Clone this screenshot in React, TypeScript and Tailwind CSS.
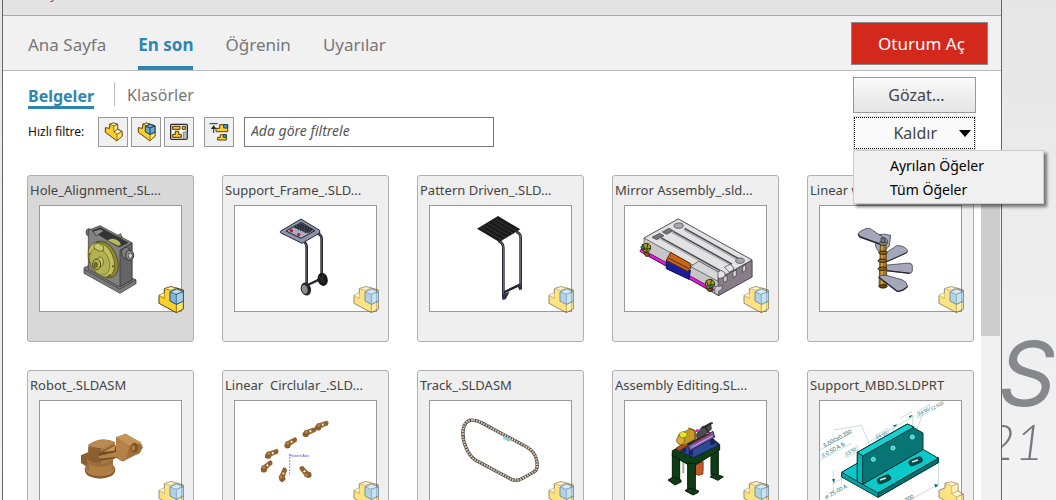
import { useState } from "react";
import type { ReactNode } from "react";

interface RecentDoc {
  id: string;
  name: string;
  kind: "assembly" | "part";
  art: ReactNode;
}

const tabs = ["Ana Sayfa", "En son", "Öğrenin", "Uyarılar"];

/* ---------- file type icons ---------- */

const AssemblyBadge = () => (
  <svg viewBox="412 346 78 87" className="h-[29px] w-[26px]" strokeLinejoin="round">
    <path d="M415 374l16-7v-13l20-6 17 4 20 6v57l-21 11-52-28z" fill="#fbd02c" stroke="#5a3d0c" strokeWidth="3" />
    <path d="M431 354l20-6 16 4-17 7z" fill="#fdf0b8" stroke="#8a6a1c" strokeWidth="2" />
    <path d="M415 374l16-7v12z" fill="#fdf0b8" />
    <path d="M415 374l16 10v-18" fill="none" stroke="#8a6a1c" strokeWidth="2" />
    <path d="M467 401l21-11v25l-21 11z" fill="#fce566" stroke="#5a3d0c" strokeWidth="2" />
    <path d="M448 364l20-9 20 8v28l-21 10-19-10z" fill="#7fb5d8" stroke="#1d4c66" strokeWidth="3" />
    <path d="M448 364l20-9 20 8-21 8z" fill="#b9dcf0" stroke="#1d4c66" strokeWidth="2" />
    <path d="M467 371v30l21-10v-28z" fill="#a3cfe8" stroke="#1d4c66" strokeWidth="2" />
  </svg>
);

const PartBadge = () => (
  <svg viewBox="412 451 78 87" className="h-[29px] w-[26px]" strokeLinejoin="round">
    <path d="M415 479l18-7v-14l19-4 20 5v22l16 9v26l-21 13-52-29z" fill="#fbd02c" stroke="#5a3d0c" strokeWidth="3" />
    <path d="M433 458l19-4 20 5-19 7z" fill="#fdf0b8" stroke="#8a6a1c" strokeWidth="2" />
    <path d="M453 466l19-7v22l-19 8z" fill="#fce98a" stroke="#8a6a1c" strokeWidth="2" />
    <path d="M453 489l18-8 17 9-20 9z" fill="#fdf0b8" stroke="#8a6a1c" strokeWidth="2" />
    <path d="M468 499l20-9v26l-20 13z" fill="#fce566" stroke="#5a3d0c" strokeWidth="2" />
  </svg>
);

const PartFilterIcon = () => (
  <svg viewBox="309 366 60 60" className="size-5" strokeLinejoin="round">
    <path d="M316 383l13 2v-12l11-4 13 4v14l13 7v15l-16 13-34-25z" fill="#fbd02c" stroke="#5a3d0c" strokeWidth="3" />
    <path d="M329 373l11-4 13 4-12 5z" fill="#fdf0b8" stroke="#5a3d0c" strokeWidth="2" />
    <path d="M341 378l12-5v15l-11 8z" fill="#fce98a" stroke="#5a3d0c" strokeWidth="2" />
    <path d="M342 396l11-8 13 6-14 9z" fill="#fdf0b8" stroke="#5a3d0c" strokeWidth="2" />
    <path d="M351 403v19l15-13v-15z" fill="#fce566" stroke="#5a3d0c" strokeWidth="2" />
  </svg>
);

const AssemblyFilterIcon = () => (
  <svg viewBox="408 366 60 60" className="size-5" strokeLinejoin="round">
    <path d="M415 383l13 2v-12l11-4 26 8v32l-16 13-34-25z" fill="#fbd02c" stroke="#5a3d0c" strokeWidth="3" />
    <path d="M428 373l11-4 11 3-10 5z" fill="#fdf0b8" stroke="#5a3d0c" strokeWidth="2" />
    <path d="M450 403v19l15-13v-13z" fill="#fce566" stroke="#5a3d0c" strokeWidth="2" />
    <path d="M436 379l14-6 15 5v19l-15 6-14-7z" fill="#6aa9d0" stroke="#1d3f56" strokeWidth="3" />
    <path d="M436 379l14 5 15-6M450 384v19" fill="none" stroke="#1d3f56" strokeWidth="3" />
  </svg>
);

const DrawingFilterIcon = () => (
  <svg viewBox="507 366 60 60" className="size-5">
    <rect x="512" y="373" width="50" height="45" rx="3" fill="#f4f4f4" stroke="#2b2b2b" strokeWidth="4" />
    <path d="M518 379h22v9h-22zM547 379h9v9h-9z" fill="#fbc81c" stroke="#4a3208" strokeWidth="3" />
    <path d="M526 394h10v9h8v9h-26v-9h8z" fill="#fbc81c" stroke="#4a3208" strokeWidth="3" />
    <path d="M550 396h11v21h-11z" fill="#b8b8b8" stroke="#666" strokeWidth="2" />
  </svg>
);

const TopLevelFilterIcon = () => (
  <svg viewBox="627 366 60 60" className="size-5">
    <path d="M629 371h24M641 399v-22" stroke="#2b2b2b" strokeWidth="3" />
    <path d="M632 387l9-11 9 11z" fill="#2b2b2b" />
    <path d="M659 374h24v21h-35v-10h11z" fill="#fbd02c" stroke="#5a3d0c" strokeWidth="3" />
    <path d="M671 374h12v10h-12z" fill="#4f9fd0" stroke="#1d3f56" strokeWidth="3" />
    <path d="M661 404h18v16h-26v-8h8z" fill="#fbd02c" stroke="#5a3d0c" strokeWidth="3" />
    <path d="M670 404h9v8h-9z" fill="#4f9fd0" stroke="#1d3f56" strokeWidth="3" />
  </svg>
);

const filters = [
  { id: "parts", label: "Parçalar", icon: <PartFilterIcon /> },
  { id: "assemblies", label: "Montajlar", icon: <AssemblyFilterIcon /> },
  { id: "drawings", label: "Teknik resimler", icon: <DrawingFilterIcon /> },
];

/* ---------- model previews ---------- */

const HoleAlignmentArt = () => (
  <svg viewBox="60 108 423 315" className="h-full w-full" strokeLinejoin="round">
    <g stroke="#2e2e2e" strokeWidth="2">
      <ellipse cx="207" cy="187" rx="9" ry="11" fill="#777" />
      <path d="M192 293l24-10 132 46v12l-48 29-108-60z" fill="#7c7c7e" />
      <path d="M192 298l107 59 49-27" fill="none" />
      <path d="M205 181l35-14 96 51v112l-39 20-92-52z" fill="#808082" />
      <path d="M300 240l36-21v111l-36 20z" fill="#656567" />
      <path d="M216 182l25-9 83 45-27 13z" fill="#343436" />
      <path d="M262 212c8-12 37-8 42 13l-9 4z" fill="#b9b95a" />
      <path d="M294 196l8-5 4 12h-8z" fill="#8f8f35" />
      <path d="M219 184l22-7 10 6-22 15z" fill="#8c8c8e" />
    </g>
    <ellipse cx="254" cy="268" rx="37" ry="58" transform="rotate(-24 254 268)" fill="#8b8a31" stroke="#3c3b12" strokeWidth="2" />
    <ellipse cx="244" cy="269" rx="36" ry="55" transform="rotate(-24 244 269)" fill="#c2c160" stroke="#4a4916" strokeWidth="2" />
    <ellipse cx="239" cy="275" rx="28" ry="42" transform="rotate(-24 239 275)" fill="#b3b252" stroke="#6d6c28" strokeWidth="2" />
    <path d="M222 224l12-5 16 9 1 13-12 3-17-9z" fill="#c9c86b" stroke="#4a4916" strokeWidth="2" />
    <ellipse cx="240" cy="276" rx="10" ry="15" fill="#c8c76b" stroke="#4a4916" strokeWidth="2" />
    <ellipse cx="230" cy="283" rx="12" ry="16" fill="#b6b556" stroke="#4a4916" strokeWidth="3" />
    <ellipse cx="227" cy="285" rx="5" ry="8" fill="#77762a" stroke="#3c3b12" strokeWidth="2" />
    <circle cx="208" cy="253" r="3" fill="#55541c" />
    <circle cx="279" cy="289" r="3" fill="#55541c" />
    <circle cx="268" cy="316" r="3" fill="#55541c" />
    <ellipse cx="318" cy="249" rx="13" ry="17" fill="#7d7d7f" stroke="#2e2e2e" strokeWidth="2" />
    <ellipse cx="329" cy="256" rx="12" ry="15" fill="#8c8c8e" stroke="#2e2e2e" strokeWidth="3" />
    <ellipse cx="331" cy="257" rx="6" ry="8" fill="#d5d5d5" stroke="#2e2e2e" strokeWidth="2" />
  </svg>
);

const SupportFrameArt = () => (
  <svg viewBox="60 108 423 315" className="h-full w-full" strokeLinejoin="round" fill="none">
    <path d="M262 212q13 7 13 20v108M305 188q15 5 15 20v105" stroke="#20232c" strokeWidth="8" />
    <path d="M262 212q13 7 13 20v108M305 188q15 5 15 20v105" stroke="#747a8a" strokeWidth="2" />
    <path d="M278 345l42-20" stroke="#252833" strokeWidth="7" />
    <path d="M196 184l62-37 56 34v8l-53 31-65-32z" fill="#8f94ab" stroke="#252833" strokeWidth="3" />
    <path d="M213 183l46-26 41 25-42 23z" fill="#a8acbe" stroke="#20232c" strokeWidth="3" />
    <path d="M234 172l24-14 40 22-18 10z" fill="#444752" />
    <path d="M240 171l37 18M248 166l37 19M257 162l35 19" stroke="#14151a" strokeWidth="4" strokeDasharray="5 3" />
    <circle cx="229" cy="182" r="5" fill="#c01a22" />
    <circle cx="251" cy="194" r="5" fill="#c01a22" />
    <ellipse cx="323" cy="328" rx="15" ry="20" transform="rotate(-15 323 328)" fill="#17181b" />
    <path d="M313 318l8 18M322 315l4 24" stroke="#454852" strokeWidth="2" />
    <ellipse cx="273" cy="357" rx="15" ry="20" transform="rotate(-15 273 357)" fill="#25272b" />
    <ellipse cx="269" cy="358" rx="10" ry="15" transform="rotate(-15 269 358)" fill="#8b8d8f" stroke="#111" strokeWidth="2" />
  </svg>
);

const PatternDrivenArt = () => (
  <svg viewBox="60 108 423 315" className="h-full w-full" strokeLinejoin="round" fill="none">
    <path d="M266 214q14 5 14 20v150M318 185q14 4 14 18v155" stroke="#1f222b" strokeWidth="8" />
    <path d="M266 214q14 5 14 20v150M318 185q14 4 14 18v155" stroke="#6d7386" strokeWidth="3" />
    <path d="M282 367l50-24" stroke="#20232e" strokeWidth="7" />
    <path d="M277 390v-17l22-8-12 23zM321 345l15-5v18l-8 2z" fill="#2f3342" />
    <path d="M201 176l63-38 67 40-63 38z" fill="#1a1a1a" />
    <path d="M211 172l68 39M222 165l68 40M233 159l68 39M244 152l68 40M254 146l68 39" stroke="#444" strokeWidth="2" />
  </svg>
);

const MirrorAssemblyArt = () => (
  <svg viewBox="60 108 423 315" className="h-full w-full" strokeLinejoin="round">
    <g stroke="#3a3a3c" strokeWidth="2">
      <path d="M117 204l103-57 221 123v51l-101 56-223-126z" fill="#c6c6c8" />
      <path d="M117 204l103-57 221 123-102 57z" fill="#e2e2e3" />
      <path d="M339 328l102-57v50l-101 56z" fill="#877d88" />
    </g>
    {/* T-slots */}
    <g fill="none">
      <path d="M168 205l176 98M204 186l176 98M238 177l170 95" stroke="#4a4a4e" strokeWidth="8" />
      <path d="M167 207l176 98M203 188l176 98M237 179l170 95" stroke="#bcbcbf" strokeWidth="4" />
    </g>
    <g stroke="#3a3a3c" strokeWidth="2">
      <path d="M141 202l23-12 13 7-22 12zM172 186l20-11 13 7-20 11z" fill="#77737a" />
      <ellipse cx="221" cy="167" rx="14" ry="8" fill="#a8a8aa" />
      <ellipse cx="405" cy="272" rx="13" ry="8" fill="#a8a8aa" />
      <path d="M330 311l18-10 12 7v12l-17 6zM358 292l17-9 10 8v10l-12 5z" fill="#e5e5e6" />
      <path d="M356 321l10-5v16l-10 5zM384 305l10-5v17l-10 5zM413 290l9-6v17l-9 6z" fill="#d8d8da" />
      <path d="M257 290l24-17 58 33v28z" fill="#d6d6d8" />
      <path d="M330 350l22-3-2 12-9 5v12l-12-7z" fill="#c9c9cc" />
    </g>
    <path d="M106 240l78 43M247 318l78 44" stroke="#3f0a40" strokeWidth="11" />
    <path d="M106 240l78 43M247 318l78 44" stroke="#f014e6" strokeWidth="7" />
    <path d="M184 270l7-5 65 36-4 27-68-32z" fill="#1b1b9c" stroke="#0b0b45" strokeWidth="3" />
    <path d="M184 271l13-24 58 33 2 16-9 8z" fill="#c9641d" stroke="#5c2a08" strokeWidth="3" />
    <path d="M190 264l62 32" stroke="#5c2a08" strokeWidth="3" />
    <g stroke="#33330a" strokeWidth="3">
      <path d="M115 250l12-5 8 10-11 5z" fill="#8e4a18" />
      <circle cx="124" cy="233" r="13" fill="#a3a322" />
      <path d="M112 222l8 16M128 220l-3 25M137 235l-25 4" />
      <circle cx="113" cy="232" r="5" fill="#2f7f8a" />
      <path d="M303 355l12-5 8 10-11 5z" fill="#8e4a18" />
      <circle cx="315" cy="342" r="14" fill="#a3a322" />
      <path d="M303 331l8 16M319 328l-3 26M330 343l-26 5" />
      <circle cx="317" cy="349" r="5" fill="#2f7f8a" />
    </g>
  </svg>
);

const LinearBladesArt = () => (
  <svg viewBox="60 18 423 315" className="h-full w-full" strokeLinejoin="round">
    <g fill="#a4a7ba" stroke="#25272f" strokeWidth="2">
      <path d="M236 104q18-4 36 2l-4 32-21 22q-14-2-21-24z" />
      <path d="M174 101q4-8 27-16 10-1 14 4l47 31q5 14-16 15l-66-26z" />
      <path d="M174 103l6 8 67 24" fill="none" strokeWidth="4" />
      <path d="M248 165l42-28q20-2 33 14 0 6-6 9l-58 26z" />
      <path d="M256 187l66-30" fill="none" strokeWidth="3" />
      <path d="M252 196l74-7q10 1 11 8v16q-2 7-8 7l-77-9z" />
      <path d="M252 211l78 9" fill="none" strokeWidth="4" />
    </g>
    <path d="M241 136h17l3 124q-13 8-24 0z" fill="#a8761a" stroke="#3b2906" strokeWidth="2" />
    <path d="M246 138v122" stroke="#dfb455" strokeWidth="4" />
    <g stroke="#2b1e05" strokeWidth="3">
      <ellipse cx="249" cy="158" rx="13" ry="5" fill="#8e6a24" />
      <ellipse cx="247" cy="182" rx="13" ry="5" fill="#8e6a24" />
      <ellipse cx="247" cy="206" rx="13" ry="5" fill="#8e6a24" />
      <ellipse cx="249" cy="259" rx="12" ry="5" fill="#6b4b10" />
    </g>
    <path d="M236 231q8-8 24-5l48 14q14 7 15 20-10 12-30 14z" fill="#a4a7ba" stroke="#25272f" strokeWidth="2" />
    <path d="M236 232l55 42q18 0 32-15" fill="none" stroke="#25272f" strokeWidth="4" />
    <ellipse cx="249" cy="130" rx="12" ry="6" fill="#8b8b8f" stroke="#222" strokeWidth="2" />
    <path d="M243 114h12v14h-12z" fill="#77777b" stroke="#222" strokeWidth="2" />
  </svg>
);

const RobotArt = () => (
  <svg viewBox="60 123 423 315" className="h-full w-full" strokeLinejoin="round">
    <ellipse cx="240" cy="332" rx="45" ry="24" fill="#8f6434" />
    <ellipse cx="240" cy="328" rx="45" ry="22" fill="#b5834a" stroke="#6b4720" strokeWidth="2" />
    <path d="M183 286l21-9 8 8v28l-11 8-18-12z" fill="#8b6030" />
    <path d="M201 296h78v34q-38 26-78 0z" fill="#9d6e3b" />
    <path d="M207 312q34 20 68 0v20q-34 24-68 0z" fill="#b07d45" />
    <path d="M205 254q38-26 80-8l-2 50q-30 26-78 10z" fill="#a8773f" />
    <path d="M205 256q40-30 80-8l-38 18z" fill="#b98a52" />
    <path d="M205 262l38 3v44q-22 4-38-8z" fill="#89602f" />
    <path d="M236 281l48-27 28 24 8 10q1 16-14 16l-16-10-51 8z" fill="#6f4b22" />
    <path d="M235 288l56-13q17-3 28 8 3 17-12 21l-20-13-48 5z" fill="#b5834a" />
    <path d="M250 276l38-22-5 18z" fill="#c4955b" />
    <path d="M352 249l17 13-13 19-16 5z" fill="#7d5428" />
    <path d="M288 232l29-11 50 33-6 24-44 22-29-26z" fill="#a06f3a" />
    <path d="M288 232l29-11 49 27-38 10z" fill="#c4955b" />
    <path d="M288 232l40 25-10 42-30-25z" fill="#b5834a" />
    <ellipse cx="343" cy="263" rx="11" ry="15" fill="#7d5428" />
    <ellipse cx="340" cy="264" rx="5" ry="8" fill="#b5834a" />
  </svg>
);

// small robots of the circular pattern: x, y, rotation
const patternArms = [
  [755, 282, 10],
  [812, 249, 0],
  [868, 217, 10],
  [905, 197, 10],
  [740, 320, -8],
  [790, 345, -38],
  [857, 336, -98],
];

const CircularPatternArt = () => (
  <svg viewBox="645 123 423 315" className="h-full w-full">
    {patternArms.map(([x, y, r]) => (
      <g key={`${x}-${y}`} transform={`translate(${x} ${y}) rotate(${r})`}>
        <path d="M-19 6l5-11 12-2 4 8-4 13q-11 5-16-1z" fill="#8a5e2e" />
        <path d="M-9-3L9-13M-3 7L14-6" stroke="#9b6a35" strokeWidth="5" />
        <path d="M5-12l8-6 6 5-1 9-8 3-6-4z" fill="#8f6232" />
        <circle cx="-9" cy="1" r="4" fill="#bd8b50" />
      </g>
    ))}
    <path d="M809 282v65" stroke="#4a48e0" strokeWidth="2" strokeDasharray="6 3" />
    <text x="809" y="290" fontSize="11" fill="#4a48e0" className="font-['Liberation_Sans']">
      Pattern Axis
    </text>
  </svg>
);

const TrackArt = () => {
  const loop =
    "M190 181q12 0 22 6l140 75q20 12 26 32 6 16 2 32-2 8-12 12l-32 18q-16 9-32 2l-108-58q-18-12-28-38-10-20-9-44 0-24 14-34 6-4 17-3z";
  return (
    <svg viewBox="60 123 423 315" className="h-full w-full" fill="none">
      <path d={loop} stroke="#3d4444" strokeWidth="10" />
      <path d={loop} stroke="#e4cbb0" strokeWidth="7" strokeDasharray="5 3" />
      <path d={loop} stroke="#6f6659" strokeWidth="2" strokeDasharray="2 5" />
      <path d="M280 231l20 11" stroke="#8fd0d4" strokeWidth="9" />
    </svg>
  );
};

const AssemblyEditingArt = () => (
  <svg viewBox="645 123 423 315" className="h-full w-full" strokeLinejoin="round">
    <path d="M820 300v40M878 300v32" stroke="#a8a8aa" strokeWidth="6" />
    <path d="M855 306h24v36q-12 8-24 0z" fill="#c05a2a" stroke="#6b2c10" strokeWidth="2" />
    <g fill="#0f3d16" stroke="#061c09" strokeWidth="3">
      <path d="M787 282h22v74h-22zM903 274h22v70h-22z" />
      <path d="M774 360l14-8 25 8v6l-18 9zM900 350l14-8 26 8-16 11z" />
      <path d="M787 272l105-50 37 32v16l-82 51-60-34z" />
      <path d="M833 310h23v80h-23z" />
      <path d="M825 392l13-8 27 8v5l-16 8z" />
    </g>
    <path d="M797 268l92-36 38 23-76 38z" fill="#2d4a94" stroke="#131f45" strokeWidth="3" />
    <path d="M836 270h13v16h-13zM900 238h13v16h-13zM816 262h12v14h-12z" fill="#1b2168" />
    <path d="M833 258l76-44 5 18-74 40z" fill="#7460b0" stroke="#2b1f55" strokeWidth="3" />
    <path d="M845 262l62-34" stroke="#d9b0d0" strokeWidth="3" />
    <path d="M850 250l52-28" stroke="#b02c3a" strokeWidth="4" />
    <path d="M798 264l28-16 10 8-30 18z" fill="#a8501f" stroke="#4d2008" strokeWidth="2" />
    <path d="M806 224l36-18 14 8 2 22-36 20-16-6z" fill="#c79a25" stroke="#5c430a" strokeWidth="2" />
    <ellipse cx="812" cy="240" rx="12" ry="14" fill="#d8ac35" stroke="#5c430a" strokeWidth="2" />
    <path d="M808 221l10-7 14 6-2 10-12 4-9-5z" fill="#e8e62c" stroke="#77760c" strokeWidth="2" />
    <path d="M835 204l20 8v28" fill="none" stroke="#7a5a12" strokeWidth="4" />
    <path d="M860 222l16-22 8-2 18-10 2 20-14 12-20 14-10-2z" fill="#4a4d4a" stroke="#1d1f1d" strokeWidth="2" />
    <path d="M878 204l30-16M884 198l14 22" stroke="#2b2d2b" strokeWidth="5" />
    <circle cx="862" cy="212" r="5" fill="#e01ad8" />
  </svg>
);

const SupportMbdArt = () => (
  <svg viewBox="60 213 423 315" className="h-full w-full" strokeLinejoin="round">
    <g stroke="#5f9a9a" strokeWidth="1" fill="none">
      <path d="M190 346l150-87M100 300l84-14 36 85M338 256v66M279 286v62M350 300l22-60M100 420v60M415 395v70" />
      <path d="M100 460l140-72M240 560l175-97M125 432v30" />
      <path d="M300 265l36-20M60 360l95-52M60 390l95-50M353 244l36-20v20l-36 20zM228 315l36-20v20l-36 20zM137 367l36-20v18l-36 18z" />
    </g>
    <path d="M96 448l6 12 3-14zM402 462l13 3-8 8zM326 258l12-3-8 9zM280 286l12-3-8 9z" fill="#0c6a6a" />
    <g fill="#1a6a6a" fontSize="17" className="font-['Liberation_Sans']">
      <text transform="translate(74 353) rotate(-29)">5.000±0.250</text>
      <text transform="translate(68 383) rotate(-29)">// 0.50 A B</text>
      <text transform="translate(140 378) rotate(-29)" fontSize="14">13.50</text>
      <text transform="translate(232 328) rotate(-29)" fontSize="14">24.00</text>
      <text transform="translate(357 257) rotate(-29)" fontSize="14">24.00</text>
      <text transform="translate(395 242) rotate(-29)" fontSize="14">12.500</text>
      <text transform="translate(78 508) rotate(-29)">⌀ 25.00 A</text>
      <text transform="translate(318 517) rotate(-29)">200</text>
    </g>
    <g stroke="#063838" strokeWidth="3">
      <path d="M125 428l48-28 242-17v14l-181 105-109-61z" fill="#00a3a3" />
      <path d="M125 427l46-27 18 62 180-104 46 27-181 104z" fill="#0cc9c9" />
      <path d="M235 489l180-104v13l-181 104z" fill="#047070" />
      <path d="M172 367l150-85 47 27v50l-181 104-16-8z" fill="#077575" />
      <path d="M172 367l150-85 20 9-154 87z" fill="#18d0d0" />
      <path d="M172 367l16 11v85l-16-9z" fill="#0bb5b5" />
    </g>
    <g stroke="#e8ffff" strokeWidth="2" fill="#19d9d9">
      <circle cx="220" cy="388" r="6" />
      <circle cx="279" cy="354" r="6" />
      <circle cx="337" cy="321" r="6" />
    </g>
    <g fill="#064a4a" stroke="#022828" strokeWidth="2">
      <rect x="231" y="439" width="42" height="18" rx="9" transform="rotate(-22 252 448)" />
      <rect x="326" y="385" width="42" height="18" rx="9" transform="rotate(-22 347 394)" />
    </g>
    <path d="M240 450l18-6M336 396l18-6" stroke="#d9e8e8" strokeWidth="5" />
  </svg>
);

const docs: RecentDoc[] = [
  { id: "hole", name: "Hole_Alignment_.SL...", kind: "assembly", art: <HoleAlignmentArt /> },
  { id: "frame", name: "Support_Frame_.SLD...", kind: "assembly", art: <SupportFrameArt /> },
  { id: "driven", name: "Pattern Driven_.SLD...", kind: "assembly", art: <PatternDrivenArt /> },
  { id: "mirror", name: "Mirror Assembly_.sld...", kind: "assembly", art: <MirrorAssemblyArt /> },
  { id: "linear", name: "Linear with_.SLD...", kind: "assembly", art: <LinearBladesArt /> },
  { id: "robot", name: "Robot_.SLDASM", kind: "assembly", art: <RobotArt /> },
  { id: "circular", name: "Linear  Circlular_.SLD...", kind: "assembly", art: <CircularPatternArt /> },
  { id: "track", name: "Track_.SLDASM", kind: "assembly", art: <TrackArt /> },
  { id: "editing", name: "Assembly Editing.SL...", kind: "assembly", art: <AssemblyEditingArt /> },
  { id: "mbd", name: "Support_MBD.SLDPRT", kind: "part", art: <SupportMbdArt /> },
];

/* ---------- page ---------- */

const DocCard = ({
  doc,
  selected,
  onSelect,
}: {
  doc: RecentDoc;
  selected: boolean;
  onSelect: () => void;
}) => (
  <button
    type="button"
    onClick={onSelect}
    className={`flex h-[167px] w-[167px] flex-col rounded-[3px] border border-[#b0b0b0] text-left ${
      selected ? "bg-[#d8d8d8]" : "bg-[#efefef]"
    }`}
  >
    <span className="h-[29px] w-full overflow-hidden px-[2px] text-[13px] leading-[29px] whitespace-pre text-[#444]">
      {doc.name}
    </span>
    <span className="relative mx-[11px] block h-[107px] w-[143px] border border-[#999] bg-white">
      {doc.art}
      <span className={`absolute -right-[3px] -bottom-[4px] ${selected ? "" : "opacity-60"}`}>
        {doc.kind === "part" ? <PartBadge /> : <AssemblyBadge />}
      </span>
    </span>
  </button>
);

export default function App() {
  const [tab, setTab] = useState("En son");
  const [selected, setSelected] = useState("hole");
  const [menuOpen, setMenuOpen] = useState(true);
  const [query, setQuery] = useState("");

  return (
    <div className="flex h-screen overflow-hidden bg-linear-to-b from-[#e6e6e6] to-[#f3f3f3] pl-[2px] font-['Noto_Sans',sans-serif]">
      <main className="z-10 flex min-w-0 flex-1 flex-col border-x border-[#666] bg-white">
        <header className="flex h-4 shrink-0 items-end overflow-hidden border-b border-[#aaa] bg-[#e4e4e4] px-[25px] pb-[13px]">
          <h1 className="text-[15px] leading-5 text-[#444]">Hoş Geldiniz</h1>
        </header>

        <nav className="flex h-[55px] shrink-0 items-stretch justify-between border-b border-[#bbb] bg-[#f1f1f1] pr-[13px] pl-[25px]">
          <div className="flex gap-8">
            {tabs.map((name) => (
              <button
                key={name}
                type="button"
                onClick={() => setTab(name)}
                className={`border-b-4 pt-2 text-[17px] ${
                  tab === name
                    ? "border-[#2e86b0] font-bold text-[#2e86b0]"
                    : "border-transparent text-[#777]"
                }`}
              >
                {name}
              </button>
            ))}
          </div>
          <button
            type="button"
            className="my-[6px] h-[43px] w-[137px] border border-[#888] bg-[#d3291c] pl-1 text-[17px] text-white"
          >
            Oturum Aç
          </button>
        </nav>

        <section className="flex shrink-0 justify-between pt-[6px] pr-[25px] pl-[25px]">
          <div className="flex flex-col">
            <div className="flex h-[34px] items-center text-[16px]">
              <button
                type="button"
                className="h-[29px] border-b-3 border-[#2e86b0] pt-1 leading-6 font-bold text-[#2e86b0]"
              >
                Belgeler
              </button>
              <span className="mr-3 ml-5 h-6 w-px bg-[#bbb]" />
              <button type="button" className="pt-[2px] text-[#777]">
                Klasörler
              </button>
            </div>
            <div className="mt-[6px] flex h-[30px] items-center">
              <span className="w-[70px] text-[12px] whitespace-nowrap text-[#111]">Hızlı filtre:</span>
              <div className="flex gap-[3px]">
                {filters.map((f) => (
                  <button
                    key={f.id}
                    type="button"
                    aria-label={f.label}
                    className="flex size-[30px] items-center justify-center border border-[#999] bg-[#f0f0f0]"
                  >
                    {f.icon}
                  </button>
                ))}
              </div>
              <button
                type="button"
                aria-label="Üst düzey montajlar"
                className="ml-[10px] flex size-[30px] items-center justify-center border border-[#999] bg-[#f0f0f0]"
              >
                <TopLevelFilterIcon />
              </button>
              <input
                type="text"
                aria-label="Ada göre filtrele"
                placeholder="Ada göre filtrele"
                value={query}
                onChange={(e) => setQuery(e.target.value)}
                className="ml-[10px] h-[30px] w-[250px] border border-[#777] px-[6px] pb-1 text-[14px] italic outline-none placeholder:text-[#555]"
              />
            </div>
          </div>

          <div className="flex w-[123px] flex-col gap-[3px]">
            <button
              type="button"
              className="h-9 border border-[#999] bg-linear-to-b from-[#fafafa] to-[#e4e4e4] pl-1 text-[16px] text-[#444]"
            >
              Gözat...
            </button>
            <div className="relative">
              <button
                type="button"
                aria-expanded={menuOpen}
                onClick={() => setMenuOpen(!menuOpen)}
                className="block h-[34px] w-full border border-[#ddd] bg-[#fafafa] text-[16px] text-[#444]"
              >
                <span className="flex h-full items-center justify-end gap-[22px] border border-dotted border-black pr-[3px]">
                  Kaldır
                  <svg viewBox="0 0 12 7" className="h-[7px] w-3">
                    <path d="M0 0h12L6 7z" fill="#000" />
                  </svg>
                </span>
              </button>
              {menuOpen && (
                <div
                  role="menu"
                  className="absolute top-full left-0 z-20 flex h-[54px] w-[191px] flex-col border border-[#ccc] bg-[#f0f0f0] py-[2px] shadow-[3px_3px_3px_rgba(0,0,0,0.5)]"
                >
                  <button type="button" role="menuitem" className="h-6 pl-9 text-left text-[14px] text-black">
                    Ayrılan Öğeler
                  </button>
                  <button type="button" role="menuitem" className="h-6 pl-9 text-left text-[14px] text-black">
                    Tüm Öğeler
                  </button>
                </div>
              )}
            </div>
          </div>
        </section>

        <section className="flex min-h-0 flex-1 justify-between">
          <div className="flex min-w-0 flex-1 flex-wrap content-start gap-7 overflow-hidden pt-[25px] pl-6">
            {docs.map((doc) => (
              <DocCard
                key={doc.id}
                doc={doc}
                selected={doc.id === selected}
                onSelect={() => setSelected(doc.id)}
              />
            ))}
          </div>
          <div className="w-5 bg-[#f0f0f0] pr-px">
            <div className="h-[53%] bg-[#cdcdcd]" />
          </div>
        </section>
      </main>

      <aside className="flex w-[54px] shrink-0 flex-col items-end justify-end overflow-hidden pb-[34px] italic">
        <p className="font-['Inter'] text-[90px] leading-[84px] text-[#87888c]">S</p>
        <p className="pr-3 font-['Lato'] text-[50px] leading-[50px] font-light text-[#77787c]">21</p>
      </aside>
    </div>
  );
}
